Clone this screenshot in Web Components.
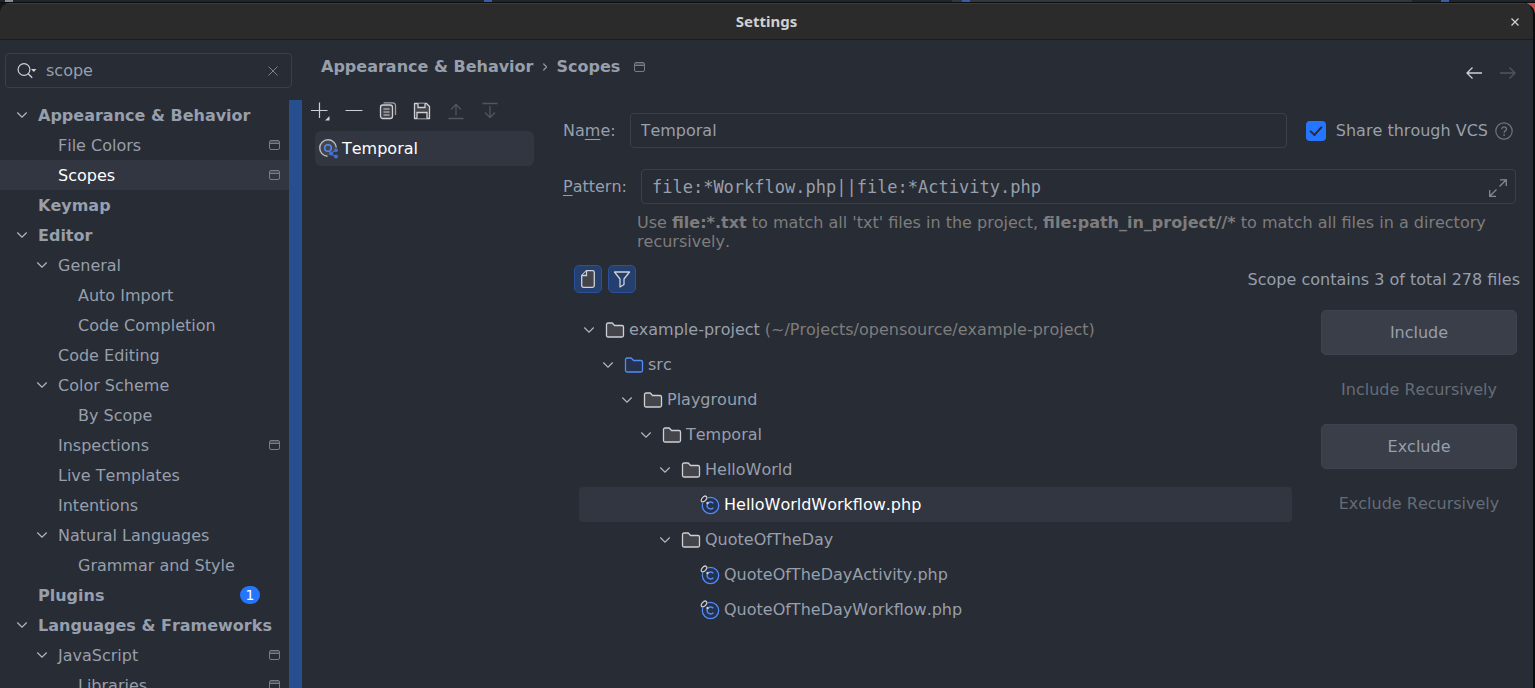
<!DOCTYPE html>
<html lang="en">
<head>
<meta charset="utf-8">
<title>Settings</title>
<style>
  html, body { margin: 0; height: 100%; }
  body {
    --bg: #282c34; --fg: #979fad; --muted: #7d7d7d; --line: #3a3f4b;
    --sel: #323640; --accent: #2675ff; --strip: #274e8f; --off: #656c78;
    background: #14171b; color: var(--fg);
    font: 16px/19px "DejaVu Sans", sans-serif; font-kerning: none; overflow: hidden;
  }
</style>
</head>
<body>
<settings-window></settings-window>
<script>
const define = (name, html, setup) => {
  const t = document.createElement('template');
  t.innerHTML = html;
  customElements.define(name, class extends HTMLElement {
    connectedCallback() {
      if (this.shadowRoot) return;
      const root = this.attachShadow({ mode: 'open' });
      root.append(t.content.cloneNode(true));
      if (setup) setup(this, root);
    }
  });
};

const folder = (stroke, fill) => [20, 20, `<path d="M1.5 4.5a1.5 1.5 0 0 1 1.5-1.5h4.2l2.4 2.5h7.400a1.500 1.500 0 0 1 1.500 1.500v8.500a1.500 1.500 0 0 1-1.500 1.500H3a1.500 1.500 0 0 1-1.500-1.500z" fill="${fill}" stroke="${stroke}" stroke-width="1.300"/>`];
const ICONS = {
  close: [10, 10, '<path d="M1.500 1.500l7 7m0-7l-7 7" stroke="#d0d0d0" stroke-width="1.300"/>'],
  clear: [12, 12, '<path d="M1.500 1.500l9 9m0-9l-9 9" stroke="#7d828c"/>'],
  search: [22, 18, '<circle cx="8" cy="7.500" r="5.900" stroke="#ced0d6" stroke-width="1.200"/><path d="M12.200 11.800l4 4" stroke="#ced0d6" stroke-width="1.300"/><path d="M15 7h5.500l-2.750 3z" fill="#ced0d6"/>'],
  chevron: [12, 12, '<path d="M1.300 3.500L6 8.200l4.700-4.700" stroke="#b4b8bf" stroke-width="1.200"/>'],
  project: [11, 12, '<path d="M1 2h9v2.500H1z" fill="#494d55"/><rect x=".5" y="1.500" width="10" height="9" rx="1.500" stroke="#797d85"/><path d="M1 4.500h9.500" stroke="#797d85"/>'],
  plus: [20, 20, '<path d="M1 9.500h16.500M9.500 1.500V17" stroke="#ced0d6" stroke-width="1.200"/><path d="M19.500 15v4.500H15z" fill="#ced0d6"/>'],
  minus: [20, 20, '<path d="M1.500 9.500h17" stroke="#ced0d6" stroke-width="1.200"/>'],
  copy: [20, 20, '<path d="M5.500 1.800h9a3 3 0 0 1 3 3V14" stroke="#9da0a8" stroke-width="1.300"/><rect x="2.500" y="4" width="12" height="13.500" rx="2.200" fill="#43454a" stroke="#ced0d6" stroke-width="1.300"/><path d="M5.500 8h6M5.500 11h6M5.500 14h6" stroke="#ced0d6"/>'],
  save: [20, 20, '<path d="M2.500 2.500h12l3 3v12h-15z" fill="#43454a" stroke="#ced0d6" stroke-width="1.300" stroke-linejoin="round"/><path d="M6 2.500v4h7v-4M5 17.500v-6h10v6" fill="#282c34" stroke="#ced0d6" stroke-width="1.300"/>'],
  up: [20, 20, '<path d="M2.500 17.500h15M10 14.500V3.500M5 8.500l5-5 5 5" stroke="#53565c" stroke-width="1.300"/>'],
  down: [20, 20, '<path d="M2.500 2.500h15M10 5v11.500M5 11.500l5 5 5-5" stroke="#53565c" stroke-width="1.300"/>'],
  back: [18, 14, '<path d="M17 7H2M7.500 1.500L2 7l5.500 5.500" stroke="#ced0d6" stroke-width="1.300"/>'],
  forward: [18, 14, '<path d="M1 7h15M10.500 1.500L16 7l-5.500 5.500" stroke="#53565c" stroke-width="1.300"/>'],
  crumb: [6, 12, '<path d="M1.500 2.500c.5 2 3 2.500 3 3.500s-2.500 1.500-3 3.500" stroke="#979fad" stroke-width="1.200"/>'],
  scope: [22, 22, '<path d="M18.300 9.500A8.300 8.300 0 1 0 9.500 18.300" fill="#43454a" stroke="#b9bcc4" stroke-width="1.400"/><circle cx="10" cy="10" r="3.300" stroke="#548af7" stroke-width="1.500"/><path d="M12.300 15.500l6-3.500m-6 3.500l6 3.500" stroke="#3f72d8" stroke-width="1.300"/><circle cx="13" cy="15.500" r="2" fill="#3f72d8"/><circle cx="18" cy="12.200" r="1.900" fill="#3f72d8"/><circle cx="18" cy="18.500" r="1.900" fill="#3f72d8"/>'],
  help: [18, 18, '<circle cx="9" cy="9" r="8.200" stroke="#6f737a" stroke-width="1.200"/><path d="M6.700 7.300c0-3.400 4.800-3 4.800-.2 0 1.900-2.400 1.700-2.400 3.900" stroke="#6f737a" stroke-width="1.300"/><circle cx="9.100" cy="13" r=".9" fill="#6f737a"/>'],
  expand: [20, 20, '<path d="M11.500 8.500l6.500-6.500M12 1.800h6.300V8M8.500 11.500L2 18M1.700 12v6.300H8" stroke="#868a91" stroke-width="1.300"/>'],
  file: [20, 20, '<path d="M8.500 1.700h6a1.800 1.800 0 0 1 1.800 1.800v13a1.800 1.800 0 0 1-1.800 1.800h-9a1.800 1.800 0 0 1-1.800-1.800V6.500z" fill="#43454a" stroke="#ced0d6" stroke-width="1.300"/><path d="M8.500 2v4.500H4" fill="#25406f" stroke="#ced0d6" stroke-width="1.300"/>'],
  filter: [20, 20, '<path d="M2.500 3h15l-5.500 7v5.500l-4 2.500v-8z" stroke="#ced0d6" stroke-width="1.300" stroke-linejoin="round"/>'],
  folder: folder('#ced0d6', '#43454a'),
  source: folder('#548af7', '#25324d'),
  php: [20, 20, '<circle cx="10.500" cy="10.500" r="8.200" fill="#25324d" stroke="#548af7" stroke-width="1.300"/><path d="M13.300 12.700a3.500 3.500 0 1 1 0-4.400" stroke="#548af7" stroke-width="1.400"/><ellipse cx="4" cy="4" rx="4.300" ry="4.300" fill="#282c34"/><ellipse cx="4" cy="4" rx="3.400" ry="2" transform="rotate(-48 4 4)" stroke="#ced0d6" stroke-width="1.300"/><circle cx="7.500" cy="8" r="1.200" fill="#ced0d6"/>']
};
define('ui-icon', `<style>:host{display:block;flex:none} svg{display:block}</style>`, (el, root) => {
  const [w, h, body] = ICONS[el.getAttribute('name')];
  root.innerHTML += `<svg width="${w}" height="${h}" viewBox="0 0 ${w} ${h}" fill="none" aria-hidden="true">${body}</svg>`;
});

define('icon-button', `<style>
  :host{display:block;flex:none}
  button{box-sizing:border-box;display:grid;place-items:center;width:28px;height:28px;padding:0;border:1px solid transparent;border-radius:5px;background:none}
  :host([pressed]) button{background:#25406f;border-color:#2a5199}
  :host([small]) button{width:20px;height:20px}
</style><button type="button"><slot></slot></button>`, (el, root) => {
  const b = root.querySelector('button');
  b.setAttribute('aria-label', el.getAttribute('label'));
  b.disabled = el.hasAttribute('disabled');
  if (el.hasAttribute('pressed')) b.setAttribute('aria-pressed', 'true');
});

define('push-button', `<style>
  :host{display:block}
  button{box-sizing:border-box;width:100%;height:45px;border:1px solid #3e4350;border-radius:5px;background:#393e49;color:inherit;font:inherit;font-kerning:none;padding:0}
  button:disabled{background:none;border-color:transparent;color:var(--off)}
</style><button type="button"><slot></slot></button>`, (el, root) => {
  root.querySelector('button').disabled = el.hasAttribute('disabled');
});

define('title-bar', `<style>
  :host{display:flex;align-items:center;justify-content:space-between;height:35px;padding:0 8px;background:#2b2b2b;border-bottom:1px solid #1b1c1f;border-top:1px solid #3d3d3d}
  :host::before{content:"";width:20px}
  h1{margin:0;font:bold 15px/19px "Noto Sans",sans-serif;color:#d0d0d0}
</style><h1><slot></slot></h1><icon-button small label="Close"><ui-icon name="close"></ui-icon></icon-button>`);

define('search-box', `<style>
  :host{box-sizing:border-box;display:flex;align-items:center;gap:8px;height:35px;margin:0 10px 0 5px;padding:0 8px 0 10px;border:1px solid var(--line);border-radius:4px}
  input{flex:1;min-width:0;padding:0;border:0;outline:0;background:none;color:inherit;font:inherit;font-kerning:none}
</style><ui-icon name="search"></ui-icon><input type="text" value="scope" aria-label="Search settings"><icon-button small label="Clear"><ui-icon name="clear"></ui-icon></icon-button>`);

define('nav-item', `<style>
  :host{display:block}
  a{display:flex;align-items:center;height:30px;padding:0 22px 0 16px;color:inherit;text-decoration:none}
  :host([level="2"]) a{padding-left:36px}
  :host([level="3"]) a{padding-left:56px}
  :host([level="1"]) a{font-weight:bold}
  :host([selected]) a{background:var(--sel);color:#fff}
  .twist{width:22px;flex:none}
  .text{flex:1;white-space:nowrap}
  .badge{width:20px;height:18px;margin-right:20px;border-radius:9px;background:var(--accent);color:#fff;font:14px/19px "DejaVu Sans",sans-serif;text-align:center}
</style><a href="#"><span class="twist"></span><span class="text"><slot></slot></span></a>`, (el, root) => {
  const a = root.querySelector('a');
  if (el.hasAttribute('open')) root.querySelector('.twist').innerHTML = '<ui-icon name="chevron"></ui-icon>';
  if (el.hasAttribute('project')) a.insertAdjacentHTML('beforeend', '<ui-icon name="project"></ui-icon>');
  if (el.hasAttribute('count')) a.insertAdjacentHTML('beforeend', `<span class="badge">${el.getAttribute('count')}</span>`);
});

define('side-bar', `<style>
  :host{display:flex;flex-direction:column;gap:12px;min-height:0;padding-top:13px}
  nav{position:relative;flex:1;min-height:0;overflow:hidden}
  .track{position:absolute;top:0;right:0;bottom:0;width:13px;background:var(--strip)}
</style>
<search-box></search-box>
<nav aria-label="Settings">
  <nav-item level="1" open>Appearance &amp; Behavior</nav-item>
  <nav-item level="2" project>File Colors</nav-item>
  <nav-item level="2" project selected>Scopes</nav-item>
  <nav-item level="1">Keymap</nav-item>
  <nav-item level="1" open>Editor</nav-item>
  <nav-item level="2" open>General</nav-item>
  <nav-item level="3">Auto Import</nav-item>
  <nav-item level="3">Code Completion</nav-item>
  <nav-item level="2">Code Editing</nav-item>
  <nav-item level="2" open>Color Scheme</nav-item>
  <nav-item level="3">By Scope</nav-item>
  <nav-item level="2" project>Inspections</nav-item>
  <nav-item level="2">Live Templates</nav-item>
  <nav-item level="2">Intentions</nav-item>
  <nav-item level="2" open>Natural Languages</nav-item>
  <nav-item level="3">Grammar and Style</nav-item>
  <nav-item level="1" count="1">Plugins</nav-item>
  <nav-item level="1" open>Languages &amp; Frameworks</nav-item>
  <nav-item level="2" open project>JavaScript</nav-item>
  <nav-item level="3" project>Libraries</nav-item>
  <div class="track"></div>
</nav>`);

define('page-header', `<style>
  :host{display:flex;align-items:flex-start;justify-content:space-between;padding:17px 11px 0 19px}
  .crumbs{display:flex;align-items:center;font-weight:bold}
  .crumbs a{color:inherit;text-decoration:none}
  ui-icon[name=crumb]{margin:0 8px 0 9px}
  ui-icon[name=project]{margin-left:14px}
  .nav{display:flex;gap:6px;padding-top:2px}
</style>
<div class="crumbs"><a href="#">Appearance &amp; Behavior</a><ui-icon name="crumb"></ui-icon><span>Scopes</span><ui-icon name="project"></ui-icon></div>
<div class="nav"><icon-button label="Back"><ui-icon name="back"></ui-icon></icon-button><icon-button label="Forward" disabled><ui-icon name="forward"></ui-icon></icon-button></div>`);

define('scope-list', `<style>
  :host{display:block}
  .tools{display:flex;gap:6px;padding-left:4px}
  .item{display:flex;align-items:center;gap:2px;height:35px;margin:6px 0 0 13px;padding-left:3px;border-radius:6px;background:var(--sel);color:#fff}
</style>
<div class="tools">
  <icon-button label="Add"><ui-icon name="plus"></ui-icon></icon-button>
  <icon-button label="Remove"><ui-icon name="minus"></ui-icon></icon-button>
  <icon-button label="Copy"><ui-icon name="copy"></ui-icon></icon-button>
  <icon-button label="Save as"><ui-icon name="save"></ui-icon></icon-button>
  <icon-button label="Move up" disabled><ui-icon name="up"></ui-icon></icon-button>
  <icon-button label="Move down" disabled><ui-icon name="down"></ui-icon></icon-button>
</div>
<div class="item"><ui-icon name="scope"></ui-icon><span>Temporal</span></div>`);

define('text-field', `<style>
  :host{display:flex;align-items:center;gap:14px;min-width:0}
  label{white-space:nowrap}
  ::slotted(u){text-underline-offset:3px}
  .box{box-sizing:border-box;flex:1;display:flex;align-items:center;min-width:0;height:35px;padding:0 8px 0 10px;border:1px solid var(--line);border-radius:4px}
  input{flex:1;min-width:0;padding:0;border:0;outline:0;background:none;color:inherit;font:inherit;font-kerning:none}
  :host([mono]) input{font:17px/20px "DejaVu Sans Mono",monospace}
</style><label for="f"><slot></slot></label><div class="box"><input id="f" type="text"><slot name="end"></slot></div>`, (el, root) => {
  root.querySelector('input').value = el.getAttribute('value');
});

define('check-field', `<style>
  :host{display:flex;align-items:center;flex:none}
  input{appearance:none;display:grid;width:20px;height:20px;margin:0 10px 0 0;border-radius:4px;background:var(--accent)}
  input::before{content:"";width:10px;height:5px;margin:5px 0 0 4px;border:solid #282c34;border-width:0 0 2px 2px;transform:rotate(-48deg)}
  label{margin-right:7px}
</style><input type="checkbox" id="c" checked><label for="c"><slot></slot></label><ui-icon name="help"></ui-icon>`);

define('file-row', `<style>
  :host{display:flex;align-items:center;height:35px;border-radius:4px;white-space:nowrap}
  :host([selected]){background:var(--sel);color:#fff}
  .twist{width:22px;flex:none}
  .icon{margin-right:4px}
  .note{color:var(--muted);margin-left:5px}
</style><span class="twist"></span><span class="icon"></span><slot></slot>`, (el, root) => {
  const kind = el.getAttribute('kind') || 'folder';
  el.setAttribute('role', 'treeitem');
  el.style.paddingLeft = (4 + 19 * Number(el.getAttribute('depth'))) + 'px';
  root.querySelector('.icon').innerHTML = `<ui-icon name="${kind}"></ui-icon>`;
  if (kind !== 'php') root.querySelector('.twist').innerHTML = '<ui-icon name="chevron"></ui-icon>';
  if (el.hasAttribute('note')) {
    const note = document.createElement('span');
    note.className = 'note';
    note.textContent = el.getAttribute('note');
    root.append(note);
  }
});

define('scope-editor', `<style>
  :host{display:block;min-width:0}
  .name{display:flex;gap:19px;padding-right:20px}
  .name text-field{flex:1}
  .pattern{margin:21px 17px 0 0}
  p{margin:9px 15px 0 74px;color:var(--muted)}
  .bar{display:flex;align-items:center;gap:6px;margin:14px 13px 0 11px}
  .bar span{margin-left:auto}
  .body{display:flex;gap:29px;margin:17px 16px 0 16px}
  .tree{flex:1;min-width:0;padding-top:2px}
  .actions{flex:none;width:196px;display:flex;flex-direction:column;gap:12px}
</style>
<div class="name"><text-field value="Temporal">Na<u>m</u>e:</text-field><check-field>Share through VCS</check-field></div>
<text-field class="pattern" mono value="file:*Workflow.php||file:*Activity.php"><u>P</u>attern:<icon-button small slot="end" label="Expand"><ui-icon name="expand"></ui-icon></icon-button></text-field>
<p>Use <b>file:*.txt</b> to match all 'txt' files in the project, <b>file:path_in_project//*</b> to match all files in a directory recursively.</p>
<div class="bar">
  <icon-button pressed label="Show files"><ui-icon name="file"></ui-icon></icon-button>
  <icon-button pressed label="Show included only"><ui-icon name="filter"></ui-icon></icon-button>
  <span>Scope contains 3 of total 278 files</span>
</div>
<div class="body">
  <div class="tree" role="tree">
    <file-row depth="0" note="(~/Projects/opensource/example-project)">example-project</file-row>
    <file-row depth="1" kind="source">src</file-row>
    <file-row depth="2">Playground</file-row>
    <file-row depth="3">Temporal</file-row>
    <file-row depth="4">HelloWorld</file-row>
    <file-row depth="5" kind="php" selected>HelloWorldWorkflow.php</file-row>
    <file-row depth="4">QuoteOfTheDay</file-row>
    <file-row depth="5" kind="php">QuoteOfTheDayActivity.php</file-row>
    <file-row depth="5" kind="php">QuoteOfTheDayWorkflow.php</file-row>
  </div>
  <div class="actions">
    <push-button>Include</push-button>
    <push-button disabled>Include Recursively</push-button>
    <push-button>Exclude</push-button>
    <push-button disabled>Exclude Recursively</push-button>
  </div>
</div>`);

define('settings-window', `<style>
  :host{display:flex;flex-direction:column;height:100vh}
  .behind{flex:none;display:flex;justify-content:space-between;height:2px;border-bottom:1px solid #0b0c0e;background:linear-gradient(90deg,#20252c 62%,#31363f 62% 92%,#20252c 92%)}
  .behind i{width:8px;background:#3a5da8}
  .behind i:first-child{margin-left:5px;background:#8a909b}
  .behind i:last-child{margin-right:86px}
  .frame{background:linear-gradient(#c75450,#c75450) right top/8px 12px no-repeat;flex:1;min-height:0;display:flex}
  .window{flex:1;min-width:0;display:flex;flex-direction:column;overflow:hidden;border-right:2px solid #0b0c0e;border-radius:10px 12px 0 0;background:var(--bg)}
  .content{flex:1;min-height:0;display:grid;grid-template-columns:302px minmax(0,1fr)}
  main{min-width:0}
  .columns{display:grid;grid-template-columns:232px minmax(0,1fr);gap:29px}
  scope-list{margin-top:10px}
  scope-editor{margin-top:26px}
</style>
<div class="behind"><i></i><i></i><i></i><i></i></div>
<div class="frame"><div class="window">
  <title-bar>Settings</title-bar>
  <div class="content">
    <side-bar></side-bar>
    <main><page-header></page-header><div class="columns"><scope-list></scope-list><scope-editor></scope-editor></div></main>
  </div>
</div></div>`);
</script>
</body>
</html>
